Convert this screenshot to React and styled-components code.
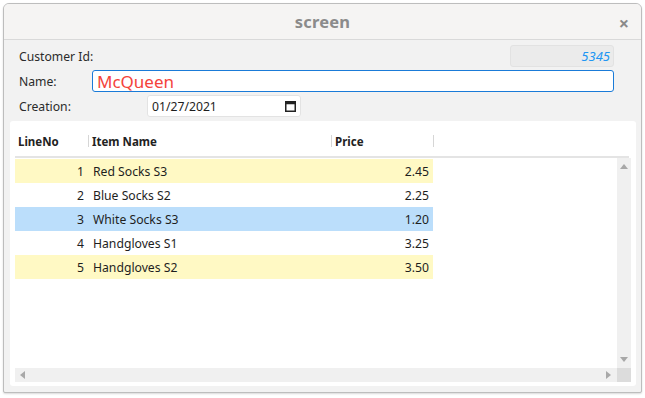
import React from 'react'
import styled, { createGlobalStyle } from 'styled-components'

// page reset
const Global = createGlobalStyle`
  html, body {
    margin: 0;
    padding: 0;
    background: #ffffff;
    font-family: "Noto Sans", "Open Sans", sans-serif;
  }
`

const Window = styled.div`
  margin: 3px;
  width: 637px;
  height: 388px;
  border: 1px solid #bdbdbd;
  border-radius: 6px 6px 2px 2px;
  background: #f2f2f2;
  display: flex;
  flex-direction: column;
  overflow: hidden;
  box-shadow: 0 1px 2px rgba(0, 0, 0, 0.15);
`

const TitleBar = styled.div`
  height: 35px;
  flex-shrink: 0;
  background: #f5f4f3;
  border-bottom: 1px solid #d9d9d9;
  display: flex;
  align-items: center;
  justify-content: center;
  position: relative;
`

const Title = styled.span`
  font-size: 16.5px;
  font-weight: 700;
  color: #8b8b8b;
  letter-spacing: 0.2px;
`

// close cross sits over the bar
const Close = styled.span`
  position: absolute;
  right: 12px;
  top: 7px;
  font-size: 18px;
  font-weight: 700;
  color: #8a8a8a;
`

const Form = styled.div`
  display: flex;
  flex-direction: column;
  gap: 3px;
  padding: 5px 27px 0 15px;
`

const FieldRow = styled.div`
  display: flex;
  align-items: center;
  height: 22px;
`

const Label = styled.div`
  width: ${p => p.$w}px;
  flex-shrink: 0;
  font-size: 12.2px;
  color: #2b2b2b;
`

const IdField = styled.div`
  margin-left: auto;
  width: 99px;
  height: 20px;
  border: 1px solid #e2e2e2;
  border-radius: 3px;
  background: #ebebeb;
  display: flex;
  align-items: center;
  justify-content: flex-end;
  padding-right: 3px;
  font-size: 13px;
  font-style: italic;
  color: #2196f3;
`

const NameInput = styled.div`
  flex: 1;
  height: 20px;
  border: 1px solid #1a7bd8;
  border-radius: 3px;
  background: #ffffff;
  display: flex;
  align-items: center;
  padding-left: 4px;
  font-size: 17px;
  color: #f4433b;
`

const DateInput = styled.div`
  width: 144px;
  height: 20px;
  border: 1px solid #e3e3e3;
  border-radius: 3px;
  background: #ffffff;
  display: flex;
  align-items: center;
  justify-content: space-between;
  padding: 0 4px 0 4px;
  font-size: 12.2px;
  color: #1e1e1e;
`

const Panel = styled.div`
  margin: 4px 5px 0 6px;
  background: #ffffff;
  border-radius: 3px;
  padding: 5px 5px 4px 5px;
  display: flex;
  flex-direction: column;
  height: 256px;
`

const Header = styled.div`
  height: 30px;
  flex-shrink: 0;
  display: flex;
  align-items: center;
  border-bottom: 2px solid #e4e4e4;
  margin-right: 2px;
`

const HeadCell = styled.div`
  width: ${p => p.$w}px;
  height: 100%;
  display: flex;
  align-items: center;
  padding-left: ${p => (p.$first ? 3 : 4)}px;
  box-sizing: border-box;
  font-size: 11.5px;
  font-weight: 700;
  color: #222;
  position: relative;
  &::after {
    content: '';
    display: ${p => (p.$sep ? 'block' : 'none')};
    position: absolute;
    right: -1px;
    top: 9px;
    height: 12px;
    border-right: 1px solid #d6d6d6;
  }
`

const Body = styled.div`
  flex: 1;
  display: grid;
  grid-template-columns: 1fr 14px;
  grid-template-rows: 1fr 14px;
`

const Rows = styled.div`
  display: flex;
  flex-direction: column;
  padding-top: 1px;
`

const Row = styled.div`
  display: flex;
  height: 24px;
  width: 418px;
  align-items: center;
  background: ${p => p.$bg};
  font-size: 12.2px;
  color: #1e1e1e;
`

const Cell = styled.div`
  width: ${p => p.$w}px;
  box-sizing: border-box;
  text-align: ${p => p.$align};
  padding: 0 4px 0 5px;
  white-space: nowrap;
`

const VScroll = styled.div`
  background: #f0f0f0;
  display: flex;
  flex-direction: column;
  justify-content: space-between;
  align-items: center;
  padding: 6px 0;
`

const HScroll = styled.div`
  background: #f0f0f0;
  display: flex;
  justify-content: space-between;
  align-items: center;
  padding: 0 6px 0 5px;
`

const Corner = styled.div`
  background: #dcdcdc;
`

const Arrow = ({ dir }) => {
  const pts = {
    up: '0,5 4,0 8,5',
    down: '0,0 4,5 8,0',
    left: '5,0 0,4 5,8',
    right: '0,0 5,4 0,8',
  }[dir]
  const vert = dir === 'up' || dir === 'down'
  return (
    <svg width={vert ? 8 : 5} height={vert ? 5 : 8} viewBox={vert ? '0 0 8 5' : '0 0 5 8'}>
      <polygon points={pts} fill="#a8a8a8" />
    </svg>
  )
}

const CalendarIcon = () => (
  <svg width="11" height="12" viewBox="0 0 11 12">
    <rect x="0.75" y="1.75" width="9.5" height="9.5" fill="none" stroke="#222" strokeWidth="1.5" />
    <rect x="0.75" y="1.75" width="9.5" height="2.5" fill="#222" />
  </svg>
)

const rows = [
  { no: 1, name: 'Red Socks S3', price: '2.45', bg: '#fff9c4' },
  { no: 2, name: 'Blue Socks S2', price: '2.25', bg: '#ffffff' },
  { no: 3, name: 'White Socks S3', price: '1.20', bg: '#bbdefb' },
  { no: 4, name: 'Handgloves S1', price: '3.25', bg: '#ffffff' },
  { no: 5, name: 'Handgloves S2', price: '3.50', bg: '#fff9c4' },
]

export default function App() {
  return (
    <>
      <Global />
      <Window>
        <TitleBar>
          <Title>screen</Title>
          <Close>×</Close>
        </TitleBar>
        <Form>
          <FieldRow>
            <Label $w={90}>Customer Id:</Label>
            <IdField>5345</IdField>
          </FieldRow>
          <FieldRow>
            <Label $w={73}>Name:</Label>
            <NameInput>McQueen</NameInput>
          </FieldRow>
          <FieldRow>
            <Label $w={128}>Creation:</Label>
            <DateInput>
              <span>01/27/2021</span>
              <CalendarIcon />
            </DateInput>
          </FieldRow>
        </Form>
        <Panel>
          <Header>
            <HeadCell $w={73} $first $sep>LineNo</HeadCell>
            <HeadCell $w={243} $sep>Item Name</HeadCell>
            <HeadCell $w={102} $sep>Price</HeadCell>
          </Header>
          <Body>
            <Rows>
              {rows.map(r => (
                <Row key={r.no} $bg={r.bg}>
                  <Cell $w={73} $align="right">{r.no}</Cell>
                  <Cell $w={243} $align="left">{r.name}</Cell>
                  <Cell $w={102} $align="right">{r.price}</Cell>
                </Row>
              ))}
            </Rows>
            <VScroll>
              <Arrow dir="up" />
              <Arrow dir="down" />
            </VScroll>
            <HScroll>
              <Arrow dir="left" />
              <Arrow dir="right" />
            </HScroll>
            <Corner />
          </Body>
        </Panel>
      </Window>
    </>
  )
}
